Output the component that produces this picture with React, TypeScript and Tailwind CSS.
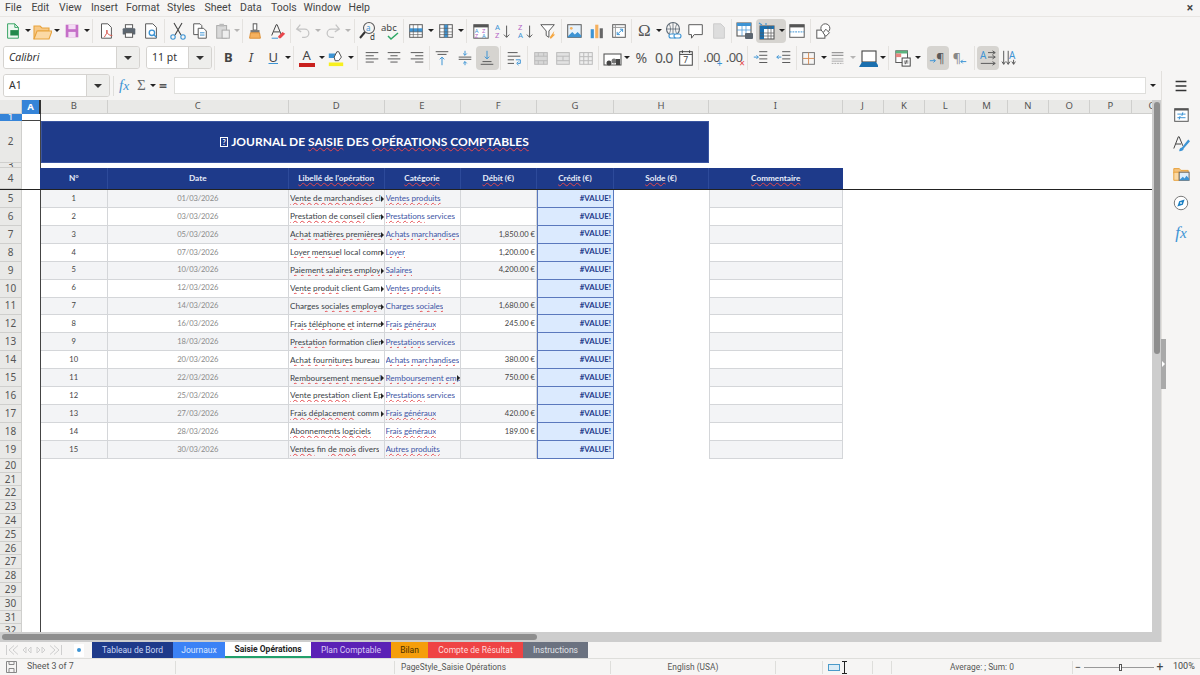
import type { ReactNode } from "react";
import clsx from "clsx";

const Ic = ({ children, size = 18 }: { children: ReactNode; size?: number }) => (
  <svg width={size} height={size} viewBox="0 0 20 20" fill="none" strokeWidth="1.1">
    {children}
  </svg>
);

const Btn = ({ children, active }: { children?: ReactNode; active?: boolean }) => (
  <div className={clsx("w-[22.5px] h-6 shrink-0 flex items-center justify-center rounded", active && "bg-[#d6d4d0]")}>
    {children}
  </div>
);

const Dd = ({ className }: { className?: string }) => (
  <div className={clsx("w-[7px] h-6 shrink-0 flex items-center justify-center", className)}>
    <div className="border-x-[3px] border-t-[3px] border-x-transparent border-t-[#222]" />
  </div>
);

const Sep = ({ w }: { w: string }) => (
  <div className={clsx("h-6 shrink-0 flex justify-center", w)}>
    <div className="w-px h-full bg-[#e4e2df]" />
  </div>
);

const G = "#5a5a5a";
const B = "#3d94d4";

/* toolbar icons */
const I = {
  fresh: <Ic><path d="M4 2h8l4 4v12H4z" fill="#eef8f1" stroke="#3aa565" /><path d="M12 2v4h4" stroke="#3aa565" /><rect x="7" y="9" width="9" height="6" fill="#23894c" /></Ic>,
  open: <Ic size={20}><path d="M2 5h6l2 2h7v3H6l-4 8z" fill="#f7c987" stroke="#e8a33d" /><path d="M2 18l3-8h15l-3 8z" fill="#fbd9a5" stroke="#e8a33d" /></Ic>,
  save: <Ic><rect x="3" y="3" width="14" height="14" fill="#c56fc8" /><rect x="6" y="3" width="8" height="5" fill="#f4dcf5" /><rect x="6" y="11" width="8" height="6" fill="#f4dcf5" /></Ic>,
  pdf: <Ic><path d="M5 2h7l4 4v12H5z" fill="#fff" stroke={G} /><path d="M8 17c2-3 4-6 3-8-1 3 2 6 6 6" stroke="#d8534c" /></Ic>,
  print: <Ic><rect x="6" y="3" width="8" height="4" fill="#fff" stroke={G} /><rect x="3" y="7" width="14" height="7" rx="1" fill="#5c6670" /><rect x="6" y="12" width="8" height="5" fill="#fff" stroke={G} /></Ic>,
  preview: <Ic><path d="M4 2h8l4 4v12H4z" fill="#fff" stroke={G} /><circle cx="11" cy="12" r="3" stroke={B} strokeWidth="1.5" /><path d="M13 14l3 3" stroke={B} strokeWidth="1.5" /></Ic>,
  cut: <Ic size={20}><path d="M6 2l7 12M14 2L7 14" stroke="#444" /><circle cx="5" cy="16" r="2.2" stroke={B} /><circle cx="15" cy="16" r="2.2" stroke={B} /></Ic>,
  copy: <Ic><path d="M3 2h7l2 2v10H3z" fill="#fff" stroke={G} /><path d="M8 7h6l3 3v8H8z" fill="#fff" stroke={G} /><path d="M10 12h5M10 14.500h5" stroke={B} /></Ic>,
  paste: <Ic><rect x="3" y="4" width="11" height="14" fill="#d9d9d9" stroke="#aaa" /><rect x="6" y="2" width="5" height="3" fill="#bbb" /><rect x="9" y="9" width="8" height="9" fill="#eee" stroke="#aaa" /></Ic>,
  clone: <Ic><rect x="8" y="2" width="4" height="7" fill="#fff" stroke={G} /><rect x="5" y="9" width="10" height="3" fill="#777" /><path d="M5 12h10l1 6H4z" fill="#f5b15f" stroke="#dd8f35" /></Ic>,
  clear: <Ic><path d="M3 15L8 3h1l5 12M5 11h7" stroke="#444" /><path d="M10 16l5-5 3 2-5 5h-2z" fill="#e8474c" /><path d="M3 18h7" stroke={B} /></Ic>,
  undo: <Ic><path d="M7 3L3 8l5 3M3 8h9a4 4 0 0 1 0 9H9" stroke="#c4c4c4" strokeWidth="1.4" /></Ic>,
  redo: <Ic><path d="M13 3l4 5-5 3M17 8H8a4 4 0 0 0 0 9h3" stroke="#c4c4c4" strokeWidth="1.4" /></Ic>,
  find: <Ic size={20}><circle cx="11" cy="7" r="5.500" stroke={G} /><path d="M7 11l-5 6" stroke="#333" strokeWidth="2" /><text x="8" y="10" fontSize="8" fill={B} fontFamily="Noto Sans">a</text><text x="12" y="19" fontSize="8" fill="#333" fontFamily="Noto Sans">d</text></Ic>,
  spell: <Ic size={20}><text x="0" y="10" fontSize="9.500" fill="#444" fontFamily="Noto Sans">abc</text><path d="M7 15l3 3 7-6" stroke="#2fa866" strokeWidth="1.5" /></Ic>,
  row: <Ic><rect x="3" y="3" width="14" height="14" fill="#fff" stroke={G} /><rect x="3" y="7" width="14" height="4" fill={B} /><path d="M3 11h14M3 14h14M7 3v14M12 3v14" stroke={G} strokeWidth=".7" /></Ic>,
  col: <Ic><rect x="3" y="3" width="14" height="14" fill="#fff" stroke={G} /><rect x="8" y="3" width="4" height="14" fill={B} /><path d="M3 7h14M3 11h14M3 14h14M8 3v14M12 3v14" stroke={G} strokeWidth=".7" /></Ic>,
  sort: <Ic><rect x="2" y="3" width="16" height="15" fill="#fff" stroke={G} /><rect x="2" y="3" width="16" height="3" fill="#555" /><text x="3" y="12" fontSize="6.500" fill={B} fontFamily="Noto Sans">A</text><text x="11" y="12" fontSize="6.500" fill="#b463c4" fontFamily="Noto Sans">Z</text><text x="3" y="18" fontSize="6.500" fill="#b463c4" fontFamily="Noto Sans">Z</text><text x="11" y="18" fontSize="6.500" fill={B} fontFamily="Noto Sans">A</text></Ic>,
  asc: <Ic><text x="1" y="9" fontSize="8.500" fill={B} fontFamily="Noto Sans">A</text><text x="1" y="18" fontSize="8.500" fill="#b463c4" fontFamily="Noto Sans">Z</text><path d="M14 4v13M11 14l3 3 3-3" stroke={G} /></Ic>,
  desc: <Ic><text x="1" y="9" fontSize="8.500" fill="#b463c4" fontFamily="Noto Sans">Z</text><text x="1" y="18" fontSize="8.500" fill={B} fontFamily="Noto Sans">A</text><path d="M14 4v13M11 14l3 3 3-3" stroke={G} /></Ic>,
  filter: <Ic><path d="M2 3h15l-6 7v7l-3-2v-5z" fill="#fff" stroke={G} /><path d="M12 17l5-7-1 4h2l-5 5z" fill="#f5a742" /></Ic>,
  image: <Ic><rect x="3" y="3" width="15" height="14" fill="#e7f2fb" stroke={G} /><circle cx="7" cy="7" r="1.500" fill="#f5b15f" /><path d="M3 16l5-5 3 3 3-3 4 4v2H3z" fill={B} /></Ic>,
  chart: <Ic><rect x="3" y="8" width="3.500" height="10" fill={B} /><rect x="8" y="3" width="3.500" height="15" fill="#f5b15f" /><rect x="13" y="7" width="3.500" height="11" fill="#666" /></Ic>,
  pivot: <Ic><rect x="3" y="3" width="14" height="14" fill="#fff" stroke={G} /><path d="M3 6h14M6 3v14" stroke="#999" /><path d="M8 14l6-6M11 8h3v3M8 11v3h3" stroke={B} /></Ic>,
  link: <Ic size={20}><circle cx="9" cy="8" r="6.500" stroke="#5f6b76" /><path d="M2.500 8h13M9 1.500v13M5 3c2 3 2 7 0 10M13 3c-2 3-2 7 0 10" stroke="#5f6b76" strokeWidth=".8" /><rect x="5" y="13" width="7" height="4" rx="2" fill="#fff" stroke={B} /><rect x="10" y="13" width="7" height="4" rx="2" fill="#fff" stroke={B} /></Ic>,
  comment: <Ic><path d="M2 3h15v11H8l-3 4v-4H2z" fill="#fff" stroke={G} /></Ic>,
  headers: <Ic><path d="M4 2h8l4 4v12H4z" fill="#ddd" stroke="#ccc" /></Ic>,
  range: <Ic size={20}><rect x="2" y="2" width="14" height="13" fill="#fff" stroke={G} /><rect x="2" y="2" width="14" height="3" fill={B} /><path d="M2 9h14M7 2v13M11 2v13" stroke={B} strokeWidth=".7" /><rect x="10" y="12" width="8" height="6" rx="1" fill="#5c6670" /></Ic>,
  freeze: <Ic size={20}><rect x="3" y="5" width="14" height="13" fill="#fff" stroke={G} /><rect x="3" y="5" width="14" height="3" fill="#1b6fae" /><rect x="3" y="5" width="4" height="13" fill="#1b6fae" /><path d="M3 12h14M3 15h14M11 5v13M14 5v13" stroke={G} strokeWidth=".7" /><path d="M2 2l3 2M9 2v2" stroke={B} /></Ic>,
  split: <Ic><rect x="2" y="3" width="16" height="14" fill="#fff" stroke={G} /><rect x="2" y="3" width="16" height="3" fill="#555" /><path d="M2 11h16" stroke={B} strokeDasharray="2 1" /></Ic>,
  shapes: <Ic><rect x="2" y="9" width="9" height="9" fill="#fff" stroke={G} /><circle cx="11.500" cy="7" r="5" fill="#fff" stroke={G} /><path d="M12 8l4 4-4 4-3-4z" fill="#fff" stroke={G} /></Ic>,
  alignL: <Ic><path d="M3 4h14M3 7.500h9M3 11h14M3 14.500h9" stroke={G} /></Ic>,
  alignC: <Ic><path d="M3 4h14M6 7.500h8M3 11h14M6 14.500h8" stroke={G} /></Ic>,
  alignR: <Ic><path d="M3 4h14M8 7.500h9M3 11h14M8 14.500h9" stroke={G} /></Ic>,
  top: <Ic><path d="M3 3h14M5 6h10" stroke={G} /><path d="M10 18V9M7.500 11.500L10 9l2.500 2.500" stroke={B} /></Ic>,
  mid: <Ic><path d="M3 9h14M3 11.500h14" stroke={G} /><path d="M10 2v5M8 5l2 2 2-2M10 18v-4M8 16l2-2 2 2" stroke={B} /></Ic>,
  bottom: <Ic><path d="M5 14h10M3 17h14" stroke={G} /><path d="M10 2v9M7.500 8.500L10 11l2.500-2.500" stroke={B} /></Ic>,
  wrap: <Ic><path d="M3 4h11M3 8h14M3 12h7M3 16h7" stroke={G} /><path d="M12 12h5v4h-3M15 14l-2 2 2 2" stroke={B} /></Ic>,
  merge: <Ic><rect x="3" y="4" width="14" height="13" fill="#d8d8d8" stroke="#bbb" /><path d="M3 8h14M3 13h14M7 4v4M13 4v4M7 13v4M13 13v4" stroke="#bbb" /></Ic>,
  merge2: <Ic><rect x="3" y="4" width="14" height="13" fill="#e2e2e2" stroke="#bbb" /><path d="M3 8h14M3 13h14M10 8v5" stroke="#bbb" /></Ic>,
  merge3: <Ic><rect x="3" y="4" width="14" height="13" fill="#eee" stroke="#bbb" /><path d="M3 8.500h14M3 13h14M7.500 4v13M12.500 4v13" stroke="#bbb" /></Ic>,
  currency: <Ic size={20}><rect x="2" y="6" width="17" height="11" fill="#fff" stroke={G} /><circle cx="7" cy="15" r="2.500" fill="#444" /><circle cx="12" cy="13" r="2.500" fill="#777" /><rect x="14" y="11" width="4" height="6" fill="#444" /></Ic>,
  date: <Ic><rect x="3" y="3" width="14" height="15" fill="#fff" stroke="#444" /><path d="M3 6h14M6 1.500v3M14 1.500v3" stroke="#444" /><text x="7" y="16" fontSize="9.500" fill="#444" fontFamily="Noto Sans">7</text></Ic>,
  indent: <Ic><path d="M8 3h9M8 7h9M8 11h9M8 15h9" stroke={G} /><path d="M2 9h5M5 7l2 2-2 2" stroke={B} /></Ic>,
  outdent: <Ic><path d="M8 3h9M8 7h9M8 11h9M8 15h9" stroke={G} /><path d="M7 9H2M4 7L2 9l2 2" stroke={B} /></Ic>,
  border: <Ic><rect x="3" y="4" width="13" height="13" stroke="#777" /><path d="M9.500 4v13M3 10.500h13" stroke="#d9905a" /></Ic>,
  line: <Ic><path d="M3 4h13M3 7h13" stroke="#999" strokeWidth="1.500" /><path d="M3 11h13M3 13.500h13" stroke="#aaa" /><path d="M3 16h13" stroke="#aaa" strokeDasharray="2 1" /></Ic>,
  bcolor: <Ic size={20}><rect x="4" y="3" width="14" height="11" fill="#fff" stroke="#444" /><path d="M1 19l3-5h14l3 5z" fill="#1b6fae" /></Ic>,
  cond: <Ic><rect x="2" y="2" width="13" height="13" fill="#fff" stroke={G} /><rect x="2" y="2" width="13" height="3" fill="#5cb37e" /><rect x="2" y="5" width="6" height="4" fill="#e8847f" /><rect x="9" y="10" width="9" height="9" fill="#fff" stroke="#444" /><path d="M11 13.500h5M11 15.500h5M14.500 12l-2 5" stroke="#444" strokeWidth=".8" /></Ic>,
  ltr: <Ic><text x="8" y="15" fontSize="14" fill={G} fontFamily="Noto Sans">¶</text><path d="M1 13h6M5 11l2 2-2 2" stroke={B} /></Ic>,
  rtl: <Ic><text x="2" y="15" fontSize="14" fill="#888" fontFamily="Noto Sans">¶</text><path d="M11 14h6M13 12l-2 2 2 2" stroke={B} /></Ic>,
  textH: <Ic><text x="1" y="11" fontSize="11" fill={B} fontFamily="Noto Sans">A</text><path d="M10 4h8M15 2l3 2-3 2M10 9h8M15 7l3 2-3 2M2 16h16M15 14l3 2-3 2" stroke={G} /></Ic>,
  textV: <Ic><text x="9" y="11" fontSize="11" fill={B} fontFamily="Noto Sans">A</text><path d="M3 2v15M1 14l2 3 2-3M8 2v15M6 14l2 3 2-3M14 12v5M12 14l2 3 2-3" stroke={G} /></Ic>,
};

const side = {
  menu: <Ic><path d="M4 5h12M4 10h12M4 15h12" stroke="#333" strokeWidth="1.600" /></Ic>,
  props: <Ic size={18}><rect x="3" y="3" width="15" height="14" fill="#fff" stroke="#555" /><rect x="3" y="3" width="15" height="2" fill="#555" /><path d="M6 9h9M6 13h9M12 7l-1 4M9 11l-1 4" stroke={B} /></Ic>,
  styles: <Ic size={18}><path d="M2 15L7 2h1l4 10M4 10h6" stroke="#444" /><path d="M8 18c0-3 2-4 3-4l7-9 2 2-7 8c0 2-2 3-5 3z" fill={B} /></Ic>,
  gallery: <Ic size={18}><path d="M2 4h6l2 2h8v3H2z" fill="#f5c27d" stroke="#e8a33d" /><path d="M2 8h6v9H2z" fill="#fbd9a5" stroke="#e8a33d" /><rect x="8" y="8" width="11" height="9" fill="#dfeefa" stroke="#666" /><path d="M8 17l4-4 2 2 2-3 3 3v2z" fill={B} /></Ic>,
  nav: <Ic size={18}><circle cx="10" cy="10" r="7.500" fill="#fff" stroke="#777" /><path d="M14 6l-2 6-6 2 2-6z" fill="#1b7fc2" /><circle cx="10" cy="10" r="1" fill="#fff" /></Ic>,
};

const FxGlyph = ({ className }: { className: string }) => (
  <span className={clsx("font-['Liberation_Serif',serif] italic text-[#3d94d4]", className)}>
    f<span className="text-[0.9em]">x</span>
  </span>
);

const AppFont = "font-['Noto_Sans',sans-serif]";
const BarFont = "font-['Roboto',sans-serif]";
const CellFont = "font-['Lato',sans-serif]";

const widths = {
  B: "w-[66.5px]",
  C: "w-[181.5px]",
  D: "w-[95.5px]",
  E: "w-[76px]",
  F: "w-[76.5px]",
  G: "w-[77px]",
  H: "w-[95px]",
  I: "w-[133.5px]",
};

// ~...~ marks what the spell checker underlines
const Txt = ({ s }: { s: string }) => (
  <>
    {s.split("~").map((part, i) =>
      i % 2 ? (
        <span key={i} className="underline decoration-wavy decoration-[#e5484d] decoration-1 underline-offset-[0.5px] [text-decoration-skip-ink:none]">
          {part}
        </span>
      ) : (
        <span key={i}>{part}</span>
      ),
    )}
  </>
);

const Over = () => (
  <div className="absolute right-0 top-[6px] border-y-[3px] border-l-[3px] border-y-transparent border-l-[#222]" />
);

const rows = [
  ["1", "01/03/2026", "~Vente de marchandises~ cl", "~Ventes produits~", "", 1, 0],
  ["2", "03/03/2026", "~Prestation de conseil~ clier", "~Prestations~ services", "", 1, 0],
  ["3", "05/03/2026", "~Achat matières premières~", "~Achats marchandises~", "1,850.00 €", 1, 0],
  ["4", "07/03/2026", "~Loyer mensuel~ local comn", "~Loyer~", "1,200.00 €", 1, 0],
  ["5", "10/03/2026", "~Paiement salaires employ~", "~Salaires~", "4,200.00 €", 1, 0],
  ["6", "12/03/2026", "~Vente produit~ client Gam", "~Ventes produits~", "", 1, 0],
  ["7", "14/03/2026", "Charges ~sociales employe~", "Charges ~sociales~", "1,680.00 €", 1, 0],
  ["8", "16/03/2026", "~Frais téléphone et~ interne", "~Frais généraux~", "245.00 €", 1, 0],
  ["9", "18/03/2026", "~Prestation~ formation clier", "~Prestations~ services", "", 1, 0],
  ["10", "20/03/2026", "~Achat fournitures~ bureau", "~Achats marchandises~", "380.00 €", 0, 0],
  ["11", "22/03/2026", "~Remboursement mensuel~", "~Remboursement emp~", "750.00 €", 1, 1],
  ["12", "25/03/2026", "~Vente prestation~ client Ep", "~Prestations~ services", "", 1, 0],
  ["13", "27/03/2026", "~Frais déplacement~ comm", "~Frais généraux~", "420.00 €", 1, 0],
  ["14", "28/03/2026", "~Abonnements logiciels~", "~Frais généraux~", "189.00 €", 0, 0],
  ["15", "30/03/2026", "~Ventes~ fin ~de mois~ divers", "~Autres produits~", "", 0, 0],
] as const;

const RowHead = ({ n, active }: { n: number; active?: boolean }) => (
  <div
    className={clsx(
      "w-[22px] h-full shrink-0 flex items-center justify-center overflow-hidden border-r border-b text-[10px]",
      AppFont,
      active ? "bg-[#3584d8] text-white border-[#3584d8]" : "bg-[#e9e9e7] text-[#555] border-[#cfcfcd]",
    )}
  >
    {n}
  </div>
);

const ColA = ({ className }: { className?: string }) => (
  <div className={clsx("w-[19px] h-full shrink-0 bg-white border-r border-[#444]", className)} />
);

const colHeads = [
  ["B", widths.B], ["C", widths.C], ["D", widths.D], ["E", widths.E], ["F", widths.F], ["G", widths.G], ["H", widths.H], ["I", widths.I],
  ["J", "w-[41.3px]"], ["K", "w-[41.3px]"], ["L", "w-[41.3px]"], ["M", "w-[41.3px]"], ["N", "w-[41.3px]"], ["O", "w-[41.3px]"], ["P", "w-[41.3px]"],
] as const;

const tabs = [
  ["Tableau de Bord", "w-[81px] bg-[#1e3a8a] text-[#c9d6f5]"],
  ["Journaux", "w-[52px] bg-[#3b82f6] text-[#dbe8ff]"],
  ["Saisie Opérations", "w-[86px] bg-white text-[#222] font-bold border-b-2 border-[#22a06b]"],
  ["Plan Comptable", "w-[80px] bg-[#5b21b6] text-[#d9c9f5]"],
  ["Bilan", "w-[37px] bg-[#f59e0b] text-[#4a3000]"],
  ["Compte de Résultat", "w-[95px] bg-[#ef4444] text-[#ffdcdc]"],
  ["Instructions", "w-[65px] bg-[#6b7280] text-[#e2e4e8]"],
] as const;

const StatusSep = () => <div className="w-px h-[13px] bg-[#dededb] shrink-0" />;

export default function App() {
  return (
    <div className={clsx("w-[1200px] h-[675px] overflow-hidden bg-[#f6f5f4] flex flex-col text-[#333]", AppFont)}>
      {/* menu bar */}
      <div className={clsx("h-[17px] shrink-0 flex items-center pl-[5px] pr-[7px] text-[10.5px] text-[#444] border-b border-[#e8e6e3]", BarFont)}>
        <span className="w-[26.500px]">File</span>
        <span className="w-[27.500px]">Edit</span>
        <span className="w-[32px]">View</span>
        <span className="w-[35px]">Insert</span>
        <span className="w-[41px]">Format</span>
        <span className="w-[37.500px]">Styles</span>
        <span className="w-[35.500px]">Sheet</span>
        <span className="w-[31px]">Data</span>
        <span className="w-[32.500px]">Tools</span>
        <span className="w-[45px]">Window</span>
        <span>Help</span>
        <span className="ml-auto text-[12px] font-bold leading-none">×</span>
      </div>

      {/* standard toolbar */}
      <div className="h-[27px] shrink-0 flex items-center pl-[1.5px]">
        <Btn>{I.fresh}</Btn><Dd />
        <Btn>{I.open}</Btn><Dd />
        <Btn>{I.save}</Btn><Dd />
        <Sep w="w-[5px]" />
        <Btn>{I.pdf}</Btn><Btn>{I.print}</Btn><Btn>{I.preview}</Btn>
        <Sep w="w-[3.75px]" />
        <Btn>{I.cut}</Btn><Btn>{I.copy}</Btn><Btn>{I.paste}</Btn><Dd className="opacity-30" />
        <Sep w="w-[3.25px]" />
        <Btn>{I.clone}</Btn><Btn>{I.clear}</Btn>
        <Sep w="w-[3px]" />
        <Btn>{I.undo}</Btn><Dd className="opacity-30" />
        <Btn>{I.redo}</Btn><Dd className="opacity-30" />
        <Sep w="w-[6px]" />
        <Btn>{I.find}</Btn><Btn>{I.spell}</Btn>
        <Sep w="w-[3px]" />
        <Btn>{I.row}</Btn><Dd />
        <Btn>{I.col}</Btn><Dd />
        <Sep w="w-[5.5px]" />
        <Btn>{I.sort}</Btn><Btn>{I.asc}</Btn><Btn>{I.desc}</Btn><Btn>{I.filter}</Btn>
        <Sep w="w-[3.5px]" />
        <Btn>{I.image}</Btn><Btn>{I.chart}</Btn><Btn>{I.pivot}</Btn>
        <Sep w="w-[2.5px]" />
        <Btn><span className="text-[17px] leading-none text-[#555] font-['Liberation_Serif',serif]">Ω</span></Btn><Dd />
        <Btn>{I.link}</Btn><Btn>{I.comment}</Btn><Btn>{I.headers}</Btn>
        <Sep w="w-[3.5px]" />
        <Btn>{I.range}</Btn>
        <div className="flex rounded bg-[#d6d4d0]"><Btn>{I.freeze}</Btn><Dd /></div>
        <Btn>{I.split}</Btn>
        <Sep w="w-[5px]" />
        <Btn>{I.shapes}</Btn>
      </div>

      {/* formatting toolbar */}
      <div className="h-[27px] shrink-0 flex items-center pl-[3px]">
        <div className="w-[137px] h-[23px] shrink-0 flex border border-[#d5d3d0] rounded-[3px] overflow-hidden">
          <div className="flex-1 bg-white flex items-center pl-[5px] text-[10.5px] italic">Calibri</div>
          <div className="w-[23px] bg-[#eeeeec] border-l border-[#d5d3d0] flex items-center justify-center">
            <div className="border-x-[4px] border-t-[4px] border-x-transparent border-t-[#333]" />
          </div>
        </div>
        <div className="w-[66px] h-[23px] ml-[6px] shrink-0 flex border border-[#d5d3d0] rounded-[3px] overflow-hidden">
          <div className="flex-1 bg-white flex items-center pl-[5px] text-[10.5px]">11 pt</div>
          <div className="w-[23px] bg-[#eeeeec] border-l border-[#d5d3d0] flex items-center justify-center">
            <div className="border-x-[4px] border-t-[4px] border-x-transparent border-t-[#333]" />
          </div>
        </div>
        <Sep w="w-[5px]" />
        <Btn><span className="text-[13px] font-bold text-[#444]">B</span></Btn>
        <Btn><span className="text-[13px] italic text-[#444]">I</span></Btn>
        <Btn><span className="text-[13px] text-[#444] underline decoration-[#3d94d4]">U</span></Btn><Dd />
        <Sep w="w-[4px]" />
        <Btn>
          <div className="flex flex-col items-center leading-none">
            <span className="text-[13px] h-[13px] leading-[13px] text-[#444]">A</span>
            <span className="w-4 h-[4px] mt-[1px] bg-[#c9211e]" />
          </div>
        </Btn><Dd />
        <Btn>
          <Ic>
            <rect x="2" y="5" width="8" height="5" fill="#3d94d4" />
            <path d="M8 9l3-6h2l3 6-3 4H9z" fill="#fff" stroke="#555" />
            <rect x="2" y="15" width="16" height="4" fill="#f7f01e" />
          </Ic>
        </Btn><Dd />
        <Sep w="w-[6px]" />
        <Btn>{I.alignL}</Btn><Btn>{I.alignC}</Btn><Btn>{I.alignR}</Btn>
        <Sep w="w-[3px]" />
        <Btn>{I.top}</Btn><Btn>{I.mid}</Btn><Btn active>{I.bottom}</Btn>
        <Sep w="w-[4.25px]" />
        <Btn>{I.wrap}</Btn>
        <Sep w="w-[4.25px]" />
        <Btn>{I.merge}</Btn><Btn>{I.merge2}</Btn><Btn>{I.merge3}</Btn>
        <Sep w="w-[3.5px]" />
        <Btn>{I.currency}</Btn><Dd />
        <Btn><span className="text-[14px] text-[#555]">%</span></Btn>
        <Btn><span className="text-[14px] text-[#555] tracking-tighter">0.0</span></Btn>
        <Btn>{I.date}</Btn>
        <Sep w="w-[2.75px]" />
        <Btn>
          <div className="relative text-[13px] text-[#555] tracking-tighter">
            .00<span className="absolute -right-[2px] -bottom-[1px] text-[10px] leading-none text-[#3d94d4]">+</span>
          </div>
        </Btn>
        <Btn>
          <div className="relative text-[13px] text-[#555] tracking-tighter">
            .00<span className="absolute -right-[2px] -bottom-[1px] text-[10px] leading-none text-[#e5484d]">×</span>
          </div>
        </Btn>
        <Sep w="w-[4.75px]" />
        <Btn>{I.indent}</Btn><Btn>{I.outdent}</Btn>
        <Sep w="w-[2.5px]" />
        <Btn>{I.border}</Btn><Dd />
        <Btn>{I.line}</Btn><Dd className="opacity-30" />
        <Btn>{I.bcolor}</Btn><Dd />
        <Sep w="w-[5.5px]" />
        <Btn>{I.cond}</Btn><Dd />
        <div className="w-[5.5px] shrink-0" />
        <Btn active>{I.ltr}</Btn><Btn>{I.rtl}</Btn>
        <Sep w="w-[5px]" />
        <Btn active>{I.textH}</Btn><Btn>{I.textV}</Btn>
      </div>

      <div className="flex-1 min-h-0 flex">
        <div className="w-[1161px] shrink-0 flex flex-col">
          {/* formula bar */}
          <div className="h-[29px] shrink-0 flex items-center pl-[3px] pr-[4px]">
            <div className="w-[107px] h-[23px] shrink-0 flex border border-[#d5d3d0] rounded-[3px] overflow-hidden">
              <div className="flex-1 bg-white flex items-center pl-[5px] text-[10.5px]">A1</div>
              <div className="w-[23px] bg-[#eeeeec] border-l border-[#d5d3d0] flex items-center justify-center">
                <div className="border-x-[4px] border-t-[4px] border-x-transparent border-t-[#333]" />
              </div>
            </div>
            <div className="w-px h-[20px] ml-[3px] bg-[#dededb]" />
            <FxGlyph className="w-[18px] ml-[5px] text-[15px] leading-none" />
            <span className="w-[12px] text-[15px] leading-none text-[#666] font-['Liberation_Serif',serif]">Σ</span>
            <Dd />
            <span className="w-[14px] ml-[3px] text-[14px] leading-none text-[#555] font-bold">=</span>
            <div className="flex-1 ml-[1px] h-[17px] bg-white border border-[#dededb]" />
            <Dd className="ml-[3px] w-[8px]" />
          </div>

          {/* sheet */}
          <div className="flex-1 min-h-0 flex">
            <div className="w-[1152px] shrink-0 flex flex-col">
              <div className="flex-1 min-h-0 overflow-hidden bg-white">
                {/* column headers */}
                <div className="h-[14px] flex text-[9.5px] text-[#555]">
                  <div className="w-[22px] shrink-0 bg-[#e9e9e7] border-r border-b border-[#cfcfcd]" />
                  <div className="w-[19px] shrink-0 bg-[#3584d8] text-white font-bold flex items-center justify-center border-r-2 border-[#333]">A</div>
                  {colHeads.map(([c, w]) => (
                    <div key={c} className={clsx(w, "shrink-0 bg-[#e9e9e7] border-r border-b border-[#cfcfcd] flex items-center justify-center")}>{c}</div>
                  ))}
                  <div className="flex-1 overflow-hidden bg-[#e9e9e7] border-b border-[#cfcfcd] flex items-center pl-[17px]">Q</div>
                </div>

                {/* rows 1 to 4 */}
                <div className="h-[7px] flex">
                  <RowHead n={1} active />
                  <ColA className="border-b border-b-[#444]" />
                </div>
                <div className="h-[42px] flex">
                  <RowHead n={2} />
                  <ColA />
                  <div className={clsx("w-[668px] shrink-0 bg-[#1e3a8a] text-white font-bold text-[12px] flex items-center justify-center border border-[#3a55a0] pr-[1px]", CellFont)}>
                    <span className="mr-[3px] w-[8px] h-[10px] border border-white text-[7px] leading-[8px] text-center">?</span>
                    <span>JOURNAL DE <Txt s="~SAISIE~ DES ~OPÉRATIONS COMPTABLES~" /></span>
                  </div>
                </div>
                <div className="h-[5px] flex">
                  <RowHead n={3} />
                  <ColA />
                </div>
                <div className="h-[22px] flex border-b border-[#222]">
                  <RowHead n={4} />
                  <div className="w-[18px] shrink-0" />
                  <div className={clsx("flex text-[8.2px] font-bold text-[#e8edf9] bg-[#1e3a8a] pl-px", CellFont)}>
                    <div className={clsx(widths.B, "flex items-center justify-center border-r border-[#2d4a9a]")}>N°</div>
                    <div className={clsx(widths.C, "flex items-center justify-center border-r border-[#2d4a9a]")}>Date</div>
                    <div className={clsx(widths.D, "flex items-center justify-center border-r border-[#2d4a9a]")}><Txt s="~Libellé de l'opération~" /></div>
                    <div className={clsx(widths.E, "flex items-center justify-center border-r border-[#2d4a9a]")}><Txt s="~Catégorie~" /></div>
                    <div className={clsx(widths.F, "flex items-center justify-center border-r border-[#2d4a9a] whitespace-pre")}><Txt s="~Débit~ (€)" /></div>
                    <div className={clsx(widths.G, "flex items-center justify-center border-r border-[#2d4a9a] whitespace-pre")}><Txt s="~Crédit~ (€)" /></div>
                    <div className={clsx(widths.H, "flex items-center justify-center border-r border-[#2d4a9a] whitespace-pre")}><Txt s="~Solde~ (€)" /></div>
                    <div className={clsx(widths.I, "flex items-center justify-center")}><Txt s="~Commentaire~" /></div>
                  </div>
                </div>

                {/* data rows */}
                {rows.map((r, i) => {
                  const bg = i % 2 === 0 ? "bg-[#f3f4f6]" : "bg-white";
                  const cell = "h-full shrink-0 border-r border-b border-[#d4d6d9] flex items-center";
                  return (
                    <div key={r[0]} className={clsx("h-[17.93px] flex text-[8.2px] whitespace-pre", CellFont)}>
                      <RowHead n={i + 5} />
                      <ColA />
                      <div className={clsx(widths.B, cell, bg, "justify-center text-[#444] text-[7.6px]")}>{r[0]}</div>
                      <div className={clsx(widths.C, cell, bg, "justify-center text-[#8a8a8a] text-[7.6px] tracking-[-0.1px]")}>{r[1]}</div>
                      <div className={clsx(widths.D, cell, bg, "relative overflow-hidden pl-px pr-[3px] text-[#3a3f47]")}>
                        <div className="overflow-hidden"><Txt s={r[2]} /></div>
                        {r[5] === 1 && <Over />}
                      </div>
                      <div className={clsx(widths.E, cell, bg, "relative overflow-hidden pl-px text-[#3f57a6] tracking-[-0.08px]")}>
                        <div className="overflow-hidden"><Txt s={r[3]} /></div>
                        {r[6] === 1 && <Over />}
                      </div>
                      <div className={clsx(widths.F, cell, bg, "justify-end pr-px text-[#444] text-[7.6px]")}>{r[4]}</div>
                      <div className={clsx(widths.G, "h-full shrink-0 border-x border-b border-[#5a78bd] bg-[#dbeafe] flex items-center justify-end pr-[2px] font-bold text-[#1e3a8a] text-[7.8px]")}>#VALUE!</div>
                      <div className={clsx(widths.H, "h-full shrink-0 bg-white")} />
                      <div className={clsx(widths.I, cell, bg, "border-l")} />
                    </div>
                  );
                })}

                {/* empty rows */}
                {Array.from({ length: 13 }, (_, i) => (
                  <div key={i} className="h-[13.8px] flex">
                    <RowHead n={i + 20} />
                    <ColA />
                  </div>
                ))}
              </div>

              {/* horizontal scrollbar */}
              <div className="h-[10px] shrink-0 bg-[#cdcdcd] flex items-center pl-[2px]">
                <div className="w-[535px] h-[6px] rounded-full bg-[#8e8e8e]" />
              </div>
            </div>

            {/* vertical scrollbar */}
            <div className="w-[9px] shrink-0 bg-[#cdcdcd] flex justify-center pt-[2px]">
              <div className="w-[6px] h-[252px] rounded-full bg-[#8e8e8e]" />
            </div>
          </div>
        </div>

        {/* sidebar */}
        <div className="relative flex-1 border-l border-[#e2e0dd]">
          <div className="absolute -left-px top-[268px] w-[5px] h-[50px] bg-[#a9a9a9] flex items-center justify-center">
            <div className="border-y-[3px] border-l-[3px] border-y-transparent border-l-white" />
          </div>
          <div className="flex flex-col">
            <div className="h-[29.3px] flex items-center justify-center">{side.menu}</div>
            <div className="h-[29.3px] flex items-center justify-center">{side.props}</div>
            <div className="h-[29.3px] flex items-center justify-center">{side.styles}</div>
            <div className="h-[29.3px] flex items-center justify-center">{side.gallery}</div>
            <div className="h-[29.3px] flex items-center justify-center">{side.nav}</div>
            <div className="h-[29.3px] flex items-center justify-center"><FxGlyph className="text-[17px] leading-none" /></div>
          </div>
        </div>
      </div>

      {/* sheet tabs */}
      <div className={clsx("h-[16px] shrink-0 flex items-stretch text-[8.5px]", BarFont)}>
        <div className="w-[66px] shrink-0 flex items-center pl-[6px]">
          <svg width="56" height="12" viewBox="0 0 56 12" fill="none" stroke="#cfcfcf">
            <path d="M.5 1v10M8 1.500L3 6l5 4.500M12 1.500L7 6l5 4.500M20 3l-3 3 3 3zM25 3l-3 3 3 3zM31 3l3 3-3 3zM36 3l3 3-3 3zM44 1.500L49 6l-5 4.500M48 1.500L53 6l-5 4.500M55.500 1v10" />
          </svg>
        </div>
        <div className="w-[26px] shrink-0 pl-[8px] flex items-center">
          <div className="w-[10px] h-[13px] bg-white flex items-center justify-center">
            <div className="w-[4px] h-[4px] rounded-full bg-[#3d94d4]" />
          </div>
        </div>
        {tabs.map(([label, cls]) => (
          <div key={label} className={clsx("shrink-0 flex items-center justify-center whitespace-nowrap", cls)}>{label}</div>
        ))}
      </div>

      {/* status bar */}
      <div className={clsx("h-[17px] shrink-0 flex items-center border-t border-[#dededb] text-[8.4px] text-[#555]", BarFont)}>
        <div className="w-[27px] shrink-0 pl-[6px]">
          <svg width="11" height="12" viewBox="0 0 11 12" fill="none" stroke="#888"><path d="M.5.5h10v11H.5zM3 .5v3h5v-3M3 11.500v-4h5v4" /></svg>
        </div>
        <span className="w-[148px] shrink-0 text-[8.8px]">Sheet 3 of 7</span>
        <StatusSep />
        <div className="w-[218px] shrink-0" />
        <StatusSep />
        <span className="w-[215px] shrink-0 pl-[6px] whitespace-nowrap text-[8.3px]">PageStyle_Saisie Opérations</span>
        <StatusSep />
        <span className="w-[164px] shrink-0 text-center">English (USA)</span>
        <StatusSep />
        <div className="w-[46px] shrink-0" />
        <StatusSep />
        <div className="w-[49px] shrink-0 pl-[5px] flex items-center gap-[1px]">
          <div className="w-[12px] h-[7px] border border-[#4a9ac9] bg-[#dcecf6]" />
          <svg width="7" height="13" viewBox="0 0 7 13" fill="none" stroke="#222"><path d="M1 .5h5M3.500.5v12M1 12.500h5" /></svg>
        </div>
        <StatusSep />
        <div className="w-[18px] shrink-0" />
        <StatusSep />
        <span className="w-[180px] shrink-0 text-center">Average: ; Sum: 0</span>
        <StatusSep />
        <div className="flex-1 flex items-center text-[#444]">
          <span className="w-[10px] text-[11px] leading-none text-center">−</span>
          <div className="relative w-[70px] h-px bg-[#999] mx-[1px]">
            <div className="absolute left-[35px] -top-[3px] w-[3px] h-[7px] bg-white border border-[#555]" />
          </div>
          <span className="w-[10px] text-[12px] leading-none text-center">+</span>
          <span className="ml-[8px] text-[9px]">100%</span>
        </div>
      </div>
    </div>
  );
}
